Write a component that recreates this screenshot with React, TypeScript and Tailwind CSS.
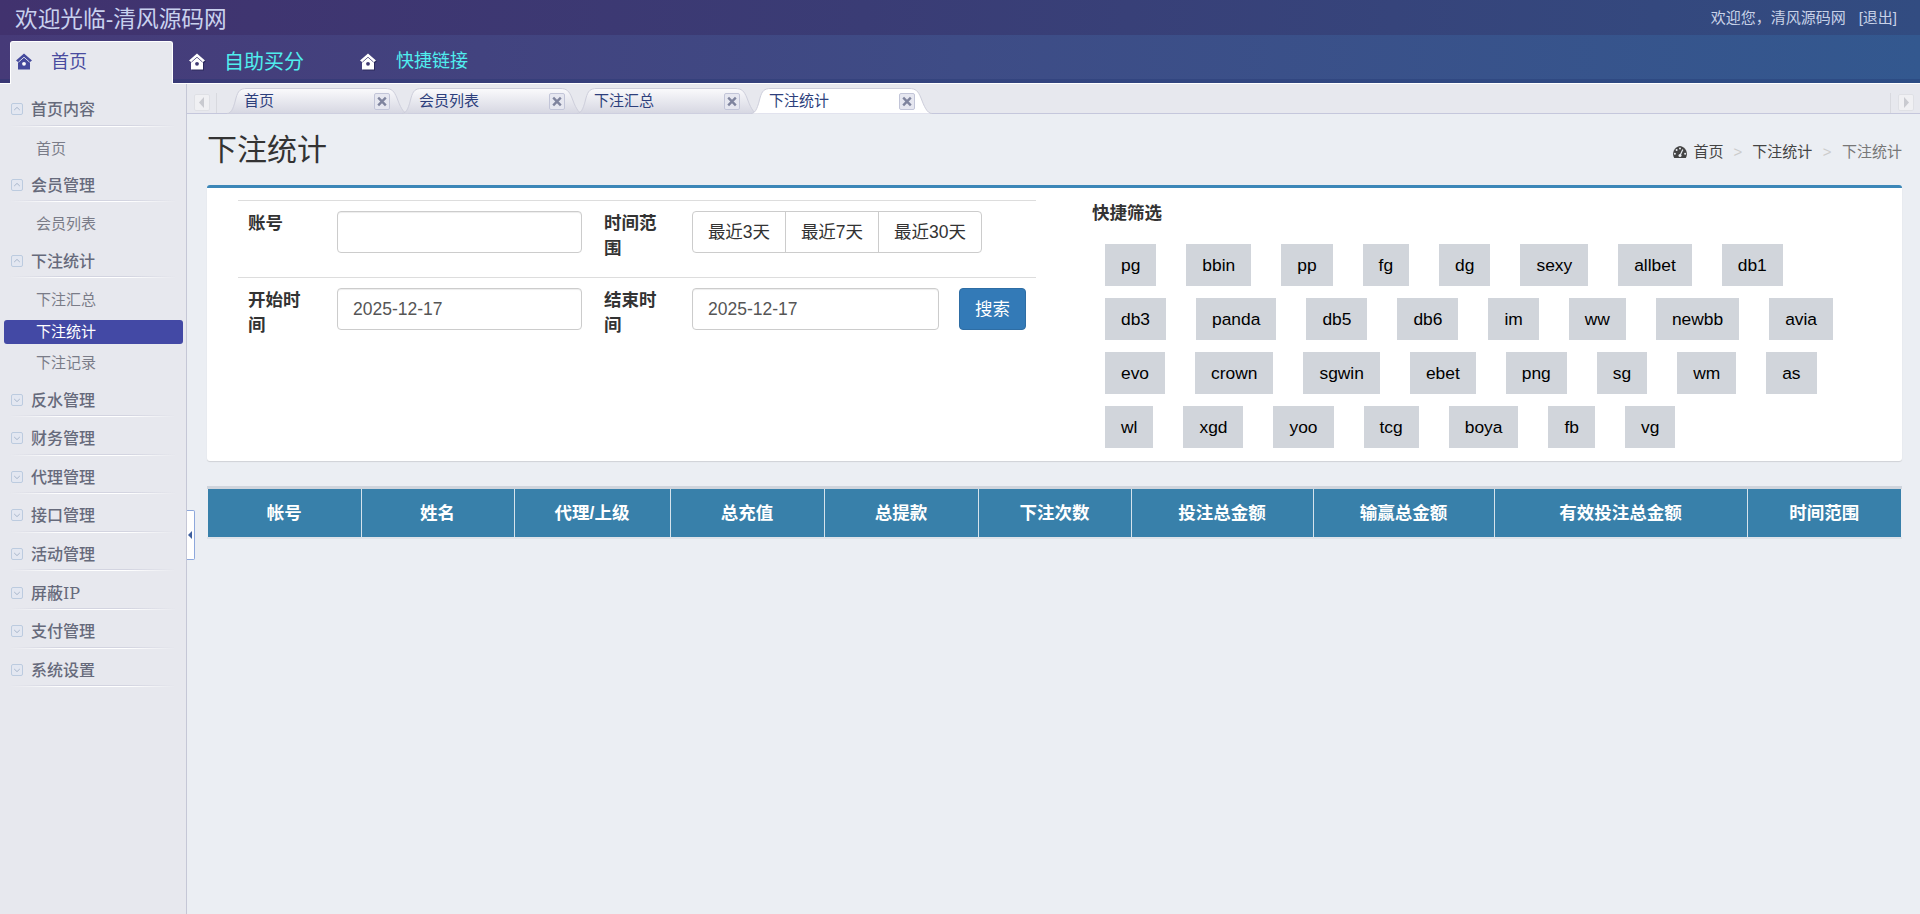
const sansFont = "font-['Liberation_Sans','Noto_Sans_CJK_SC',sans-serif]";

type MenuGroup = {
  title: string;
  open?: boolean;
  items?: { label: string; active?: boolean }[];
};

const menu: MenuGroup[] = [
  { title: "首页内容", open: true, items: [{ label: "首页" }] },
  { title: "会员管理", open: true, items: [{ label: "会员列表" }] },
  {
    title: "下注统计",
    open: true,
    items: [
      { label: "下注汇总" },
      { label: "下注统计", active: true },
      { label: "下注记录" },
    ],
  },
  { title: "反水管理" },
  { title: "财务管理" },
  { title: "代理管理" },
  { title: "接口管理" },
  { title: "活动管理" },
  { title: "屏蔽IP" },
  { title: "支付管理" },
  { title: "系统设置" },
];

const chips = [
  "pg", "bbin", "pp", "fg", "dg", "sexy", "allbet", "db1",
  "db3", "panda", "db5", "db6", "im", "ww", "newbb", "avia",
  "evo", "crown", "sgwin", "ebet", "png", "sg", "wm", "as",
  "wl", "xgd", "yoo", "tcg", "boya", "fb", "vg",
];

const columns = [
  { label: "帐号", width: "w-[153px]" },
  { label: "姓名", width: "w-[153px]" },
  { label: "代理/上级", width: "w-[156px]" },
  { label: "总充值", width: "w-[154px]" },
  { label: "总提款", width: "w-[154px]" },
  { label: "下注次数", width: "w-[153px]" },
  { label: "投注总金额", width: "w-[182px]" },
  { label: "输赢总金额", width: "w-[181px]" },
  { label: "有效投注总金额", width: "w-[253px]" },
  { label: "时间范围", width: "w-[154px]" },
];

const tabs = ["首页", "会员列表", "下注汇总", "下注统计"];

function HomeIcon({ color, gap, shadow }: { color: string; gap: string; shadow?: boolean }) {
  return (
    <svg
      width="16"
      height="17"
      viewBox="0 0 16 17"
      className={shadow ? "shrink-0 drop-shadow-[1px_1px_0_#2b2a5c]" : "shrink-0 -mt-[4px]"}
    >
      <path d="M8 0.5 L16 7.6 L14 9 L14 16.5 L2 16.5 L2 9 L0 7.6 Z" fill={color} />
      <path d="M2.4 9.2 L8 4.2 L13.6 9.2" fill="none" stroke={gap} strokeWidth="0.8" />
      <circle cx="8" cy="10.8" r="1.9" fill={gap} />
    </svg>
  );
}

function DashboardIcon() {
  return (
    <svg width="16" height="12" viewBox="0 0 16 12" className="mr-[5px] shrink-0">
      <path d="M8 0 A8 8 0 0 0 2.2 12 L13.8 12 A8 8 0 0 0 8 0 Z" fill="#444444" />
      <circle cx="2.9" cy="7.8" r="1" fill="#ebeef3" />
      <circle cx="4.6" cy="3.9" r="1" fill="#ebeef3" />
      <circle cx="8" cy="2.4" r="1" fill="#ebeef3" />
      <circle cx="13.1" cy="7.8" r="1" fill="#ebeef3" />
      <path d="M8 9.5 L10.8 3.6" stroke="#ebeef3" strokeWidth="1.2" />
      <circle cx="8" cy="9.6" r="1.5" fill="#ebeef3" />
    </svg>
  );
}

function ToggleIcon({ open }: { open?: boolean }) {
  return (
    <svg width="12" height="12" viewBox="0 0 12 12" className="shrink-0">
      <rect x="0.5" y="0.5" width="11" height="11" rx="1.5" fill="#e3e7f1" stroke="#bccbdf" />
      <path
        d={open ? "M3.2 7 L6 4.4 L8.8 7" : "M3.2 5 L6 7.6 L8.8 5"}
        fill="none"
        stroke="#a9b7cc"
        strokeWidth="1"
      />
    </svg>
  );
}

function CloseIcon() {
  return (
    <svg width="16" height="17" viewBox="0 0 16 17" className="shrink-0">
      <rect x="0.5" y="0.5" width="15" height="16" rx="1.5" fill="#e6e7f0" stroke="#c2c5d8" />
      <path d="M4.2 4.7 L11.8 12.3 M11.8 4.7 L4.2 12.3" stroke="#7f849e" strokeWidth="2.4" />
    </svg>
  );
}

function ScrollButton({ right }: { right?: boolean }) {
  return (
    <svg width="16" height="17" viewBox="0 0 16 17" className="shrink-0">
      <rect x="0.5" y="0.5" width="15" height="16" rx="1.5" fill="#f0f0f3" stroke="#dfe0e5" />
      <path d={right ? "M6 3 L11 8.5 L6 14 Z" : "M10 3 L5 8.5 L10 14 Z"} fill="#c9cad0" />
    </svg>
  );
}

function PageTab({ label, active }: { label: string; active?: boolean }) {
  return (
    <div className="relative w-[175px] h-[26px] -mb-px shrink-0">
      <svg
        width="183"
        height="26"
        viewBox="0 0 183 26"
        className={active ? "absolute left-[-1px] top-0" : "absolute left-0 top-0"}
      >
        <defs>
          <linearGradient id="tabIdle" x1="0" y1="0" x2="0" y2="1">
            <stop offset="0" stopColor="#fafafc" />
            <stop offset="1" stopColor="#d6d7e2" />
          </linearGradient>
        </defs>
        <path
          d="M0 25.5 C5 25.5 7 18 9 10 C11 3 13 0.5 20 0.5 L158 0.5 C165 0.5 167 3 170 10 C173 18 176 25.5 181 25.5"
          fill={active ? "#ffffff" : "url(#tabIdle)"}
          stroke="#cdcedb"
        />
      </svg>
      <div className="relative flex h-full items-center pl-[17px]">
        <span className="w-[130px] text-[15px] text-[#2d3f7c]">{label}</span>
        <CloseIcon />
      </div>
    </div>
  );
}

function Sidebar() {
  return (
    <aside className="w-[187px] shrink-0 border-r border-[#c5c7d6] bg-[#e7e8ee] pt-[9.5px]">
      {menu.map((group) => (
        <div key={group.title}>
          <div className="mb-[5.6px]">
            <div className="ml-[11px] flex h-[31px] items-center">
              <ToggleIcon open={group.open} />
              <span className="ml-[8px] pt-[2px] font-['DejaVu_Serif','Noto_Sans_CJK_SC',sans-serif] text-[16px] font-medium text-[#666a7b]">
                {group.title}
              </span>
            </div>
            <div className="mx-[10px] h-px bg-[linear-gradient(90deg,transparent,#d3d4e0_30%,#d3d4e0_70%,transparent)]" />
            <div className="mx-[10px] h-px bg-[linear-gradient(90deg,transparent,#ffffff_30%,#ffffff_70%,transparent)]" />
          </div>
          {group.items && (
            <div className="pt-px pb-[4.75px]">
              {group.items.map((item) =>
                item.active ? (
                  <div key={item.label} className="flex h-[31.5px] items-center">
                    <div className="ml-[4px] flex h-[24px] w-[179px] items-center rounded-[3px] bg-[#4349a5] pl-[32px] text-[15px] text-white">
                      {item.label}
                    </div>
                  </div>
                ) : (
                  <div
                    key={item.label}
                    className="flex h-[31.5px] items-center pl-[36px] text-[15px] text-[#7a7c88]"
                  >
                    {item.label}
                  </div>
                )
              )}
            </div>
          )}
        </div>
      ))}
    </aside>
  );
}

function FormLabel({ children }: { children: string }) {
  return (
    <div className="w-[60px] shrink-0 text-[17.5px] leading-[25px] font-bold text-[#333333]">
      {children}
    </div>
  );
}

function TextInput({ value, width }: { value?: string; width: string }) {
  return (
    <input
      readOnly
      value={value ?? ""}
      className={`${width} h-[42px] shrink-0 rounded-[4px] border border-[#cccccc] bg-white px-[15px] text-[17.5px] text-[#555555] shadow-[inset_0_1px_1px_rgba(0,0,0,0.075)] outline-none`}
    />
  );
}

export default function App() {
  return (
    <div className={`flex h-[914px] flex-col overflow-hidden bg-[#ebeef3] ${sansFont}`}>
      {/* top bar */}
      <header className="flex h-[35px] shrink-0 items-center justify-between bg-[linear-gradient(90deg,#41326e,#3a3c75_45%,#324c81)] pl-[15px] pr-[23px]">
        <div className="pt-[4px] text-[22.7px] text-[#c9d1ee]">欢迎光临-清风源码网</div>
        <div className="pt-px text-[15px] text-[#c8d2e8]">
          欢迎您，清风源码网<span className="ml-[13px]">[退出]</span>
        </div>
      </header>

      {/* main nav */}
      <nav className="flex h-[49px] shrink-0 items-end border-b border-white bg-[linear-gradient(90deg,#463a78,#3e4c86_50%,#33588f)] shadow-[inset_0_-4px_0_rgba(30,50,110,0.3)]">
        <div className="-mb-px ml-[10px] flex h-[43px] w-[163px] items-center rounded-t-[3px] border-x border-t border-white bg-[#e7e8ee] pl-[5px]">
          <HomeIcon color="#454a9c" gap="#ffffff" />
          <span className="ml-[19px] pb-px text-[18px] text-[#4a4c9f]">首页</span>
        </div>
        <div className="flex h-[43px] items-center">
          <div className="ml-[16px]">
            <HomeIcon color="#ffffff" gap="#3f3a72" shadow />
          </div>
          <span className="ml-[19px] w-[80px] text-[20px] text-[#50eeee]">自助买分</span>
          <div className="ml-[56px]">
            <HomeIcon color="#ffffff" gap="#3f3a72" shadow />
          </div>
          <span className="ml-[20px] text-[18px] text-[#50eeee]">快捷链接</span>
        </div>
      </nav>

      <div className="flex min-h-0 flex-1">
        <Sidebar />

        <main className="relative min-w-0 flex-1">
          {/* collapse handle */}
          <div className="absolute left-0 top-[426px] flex h-[50px] w-[8px] items-center rounded-r-[2px] border border-l-0 border-[#8ea8dc] bg-white">
            <span className="ml-[1px] h-0 w-0 border-y-[4px] border-r-[4px] border-y-transparent border-r-[#3e5f9e]" />
          </div>

          {/* tab strip */}
          <div className="flex h-[30px] items-end border-b border-[#c5c7dc] bg-[#e7e8ee] pl-[7px] pr-[6px]">
            <div className="flex h-[29px] items-center self-start pt-[8px]">
              <ScrollButton />
              <div className="ml-[6px] h-[20px] w-px bg-[#d8d9df]" />
            </div>
            <div className="ml-[10px] flex flex-1 items-end">
              {tabs.map((tab, index) => (
                <PageTab key={tab} label={tab} active={index === tabs.length - 1} />
              ))}
            </div>
            <div className="flex h-[29px] items-center self-start pt-[8px]">
              <div className="mr-[7px] h-[20px] w-px bg-[#d8d9df]" />
              <ScrollButton right />
            </div>
          </div>

          <div className="pl-[20px] pr-[18px]">
            {/* page heading */}
            <div className="flex h-[71px] items-center justify-between">
              <h1 className="text-[30px] font-normal text-[#333333]">下注统计</h1>
              <div className="flex items-center pt-[5px] text-[15px] text-[#444444]">
                <DashboardIcon />
                <span>首页</span>
                <span className="mx-[10px] text-[#cccccc]">&gt;</span>
                <span>下注统计</span>
                <span className="mx-[10.5px] text-[#cccccc]">&gt;</span>
                <span className="text-[#777777]">下注统计</span>
              </div>
            </div>

            {/* search card */}
            <section className="flex rounded-[3px] border-t-[3px] border-[#3c87b8] bg-white pb-[13px] pl-[31px] shadow-[0_1px_1px_rgba(0,0,0,0.12)]">
              <div className="w-[798px] shrink-0 pt-[12px]">
                <div className="flex h-[77px] border-t border-[#dddddd] pl-[10px] pt-[10px]">
                  <FormLabel>账号</FormLabel>
                  <div className="ml-[29px]">
                    <TextInput width="w-[245px]" />
                  </div>
                  <div className="ml-[22px]">
                    <FormLabel>时间范围</FormLabel>
                  </div>
                  <div className="ml-[28px] flex h-[42px] rounded-[4px] border border-[#cccccc] text-[17.5px] text-[#333333]">
                    <div className="flex w-[93px] items-center justify-center border-r border-[#cccccc]">最近3天</div>
                    <div className="flex w-[93px] items-center justify-center border-r border-[#cccccc]">最近7天</div>
                    <div className="flex w-[102px] items-center justify-center">最近30天</div>
                  </div>
                </div>
                <div className="flex h-[77px] border-t border-[#dddddd] pl-[10px] pt-[10px]">
                  <FormLabel>开始时间</FormLabel>
                  <div className="ml-[29px]">
                    <TextInput width="w-[245px]" value="2025-12-17" />
                  </div>
                  <div className="ml-[22px]">
                    <FormLabel>结束时间</FormLabel>
                  </div>
                  <div className="ml-[28px]">
                    <TextInput width="w-[247px]" value="2025-12-17" />
                  </div>
                  <button className="ml-[20px] h-[42px] w-[67px] rounded-[4px] border border-[#2e6da4] bg-[#337ab7] text-[17.5px] text-white">
                    搜索
                  </button>
                </div>
              </div>

              <div className="ml-[56px] pt-[12px]">
                <div className="text-[17.5px] leading-[26px] font-bold text-[#333333]">快捷筛选</div>
                <div className="mt-[18px] ml-[13px] flex w-[755px] flex-wrap gap-x-[30px] gap-y-[12px]">
                  {chips.map((chip) => (
                    <div
                      key={chip}
                      className="flex h-[42px] items-center bg-[#d1d5db] px-[16px] text-[17.4px] text-black"
                    >
                      {chip}
                    </div>
                  ))}
                </div>
              </div>
            </section>

            {/* result table */}
            <div className="mt-[25px] border-t-[3px] border-b-2 border-t-[#cfd4dc] border-b-[#dfe3e9] px-px">
              <table className="w-[1693px] table-fixed">
                <thead>
                  <tr className="h-[48px] bg-[#3880aa]">
                    {columns.map((col, index) => (
                      <th
                        key={col.label}
                        className={`${col.width} text-center text-[17.5px] font-bold text-white ${index > 0 ? "border-l border-[#d5e3ec]" : ""}`}
                      >
                        {col.label}
                      </th>
                    ))}
                  </tr>
                </thead>
              </table>
            </div>
          </div>
        </main>
      </div>
    </div>
  );
}
